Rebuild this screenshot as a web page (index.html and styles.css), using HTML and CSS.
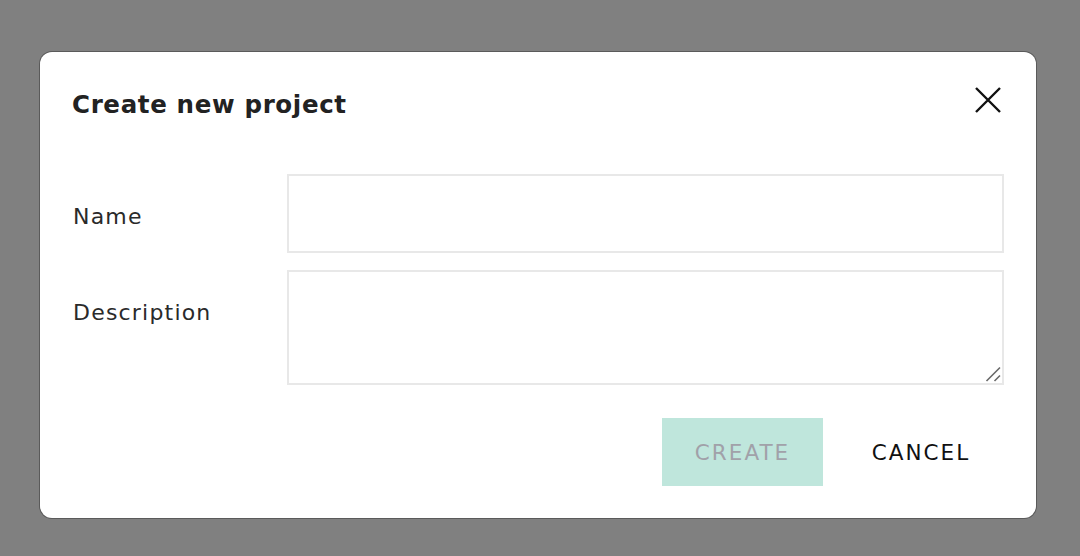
FILE: index.html
```html
<!DOCTYPE html>
<html>
<head>
<meta charset="utf-8">
<link rel="stylesheet" href="styles.css">
</head>
<body>
<div class="overlay">
  <div class="modal">
    <div class="header">
      <h2 class="title">Create new project</h2>
      <button class="close" aria-label="Close">
        <svg width="26" height="26" viewBox="0 0 26 26"><path d="M1 1 L25 25 M25 1 L1 25" stroke="#111" stroke-width="2.4" fill="none"/></svg>
      </button>
    </div>
    <div class="form">
      <label class="label label-name">Name</label>
      <input class="field field-name" type="text">
      <label class="label label-desc">Description</label>
      <div class="desc-wrap">
        <textarea class="field field-desc"></textarea>
        <svg class="resizer" width="16" height="16" viewBox="0 0 16 16"><path d="M1.5 15 L15 1.5 M9.5 15 L15 9.5" stroke="#6a6a6a" stroke-width="1.6" fill="none"/></svg>
      </div>
    </div>
    <div class="actions">
      <button class="btn btn-create">CREATE</button>
      <button class="btn btn-cancel">CANCEL</button>
    </div>
  </div>
</div>
</body>
</html>
```
FILE: styles.css
```css
html, body {
  margin: 0;
  padding: 0;
}
body {
  width: 1080px;
  height: 556px;
  overflow: hidden;
  font-family: "DejaVu Sans", sans-serif;
}
.overlay {
  width: 1080px;
  height: 556px;
  box-sizing: border-box;
  background: #808080;
  padding: 52px 0 0 40px;
}
.modal {
  width: 996px;
  height: 466px;
  box-sizing: border-box;
  background: #fff;
  border-radius: 12px;
  box-shadow: 0 0 0 1px #5a5a5a;
  padding: 32px 32px 32px 32px;
  display: flex;
  flex-direction: column;
}
.header {
  display: flex;
  justify-content: space-between;
  align-items: flex-start;
  height: 90px;
}
.title {
  margin: 6px 0 0 0;
  font-size: 24.5px;
  font-weight: bold;
  letter-spacing: 0.65px;
  color: #222;
  line-height: 30px;
}
.close {
  border: none;
  background: none;
  padding: 0;
  margin: 3px 3px 0 0;
  width: 26px;
  height: 26px;
  cursor: pointer;
}
.close svg { display: block; }
.form {
  display: grid;
  grid-template-columns: 215px 1fr;
  row-gap: 17px;
  align-items: center;
}
.label {
  font-size: 22px;
  letter-spacing: 1.2px;
  color: #2a2a2a;
  padding-left: 1px;
  padding-top: 5px;
}
.label-desc {
  align-self: start;
  padding-top: 30px;
}
.desc-wrap {
  position: relative;
}
.resizer {
  position: absolute;
  right: 3px;
  bottom: 3px;
  pointer-events: none;
}
.field {
  display: block;
  box-sizing: border-box;
  width: 100%;
  margin: 0;
  border: 2px solid #e8e8e8;
  border-radius: 0;
  background: #fff;
  outline: none;
  font-family: "DejaVu Sans", sans-serif;
  font-size: 20px;
}
.field-name { height: 79px; }
.field-desc { height: 115px; resize: none; }
.actions {
  display: flex;
  justify-content: flex-end;
  gap: 15px;
  margin-top: 33px;
}
.btn {
  height: 68px;
  border: none;
  font-family: "DejaVu Sans", sans-serif;
  font-size: 21.5px;
  letter-spacing: 2px;
  padding: 0;
  background: none;
}
.btn-create {
  width: 161px;
  background: #bfe6dc;
  color: #a1a1a9;
}
.btn-cancel {
  color: #111;
  width: 166px;
}
```
